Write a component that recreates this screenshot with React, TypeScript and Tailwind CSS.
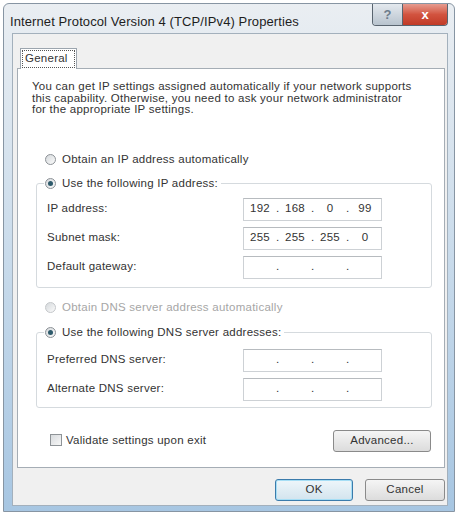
import { Fragment } from 'react'

/**
 * IPv4 properties dialog (Windows 7 look)
 * Title bar, General tab, two radio groups with IP fields, footer buttons.
 */

function Radio({ checked = false, disabled = false }: { checked?: boolean; disabled?: boolean }) {
  return (
    <span
      className={`w-[11px] h-[11px] shrink-0 rounded-full border flex items-center justify-center bg-gradient-to-br from-[#d5d9dc] to-[#fbfbfb] ${
        disabled ? 'border-[#c4c7ca]' : 'border-[#8c9196]'
      }`}
    >
      {checked && <span className="w-[5px] h-[5px] rounded-full bg-[#2e5a6b]" />}
    </span>
  )
}

function IpBox({ value }: { value?: string[] }) {
  return (
    <div className="w-[139px] h-[23px] bg-white border border-[#cdd1d5] border-t-[#b7bbbf] flex items-center text-[#333]">
      {[0, 1, 2, 3].map((i) => (
        <Fragment key={i}>
          <span className="flex-1 text-center">{value?.[i] ?? ''}</span>
          {i < 3 && <span className="w-[3px] text-center">.</span>}
        </Fragment>
      ))}
    </div>
  )
}

function FieldRow({ label, value }: { label: string; value?: string[] }) {
  return (
    <div className="flex items-center pl-[10px]">
      <span className="w-[196px]">{label}</span>
      <IpBox value={value} />
    </div>
  )
}

export default function App() {
  return (
    <div className="w-[460px] h-[515px] bg-white pt-[3px] pl-[3px] pr-[5px] pb-[3px] font-['Liberation_Sans',Arial,sans-serif] text-[#333]">
      {/* Window frame */}
      <div className="h-full flex flex-col rounded-t-[6px] border border-[#8795a3] bg-gradient-to-b from-[#eaeef2] via-[#c9dbeb] to-[#a7c6e2]">
        {/* Title bar */}
        <div className="h-[30px] flex justify-between items-start pl-[6px] pr-[6px]">
          <span className="pt-[10px] text-[13px] leading-[15px] tracking-[0.1px] text-[#1e1e1e]">
            Internet Protocol Version 4 (TCP/IPv4) Properties
          </span>
          <div className="flex h-[22px] border border-t-0 border-[#59646f] rounded-b-[4px] overflow-hidden">
            <div className="w-[30px] flex items-center justify-center bg-gradient-to-b from-[#e4e9ee] to-[#b8c3ce] border-r border-[#59646f] text-[13px] font-bold text-[#6d7c8c]">
              ?
            </div>
            <div className="w-[44px] flex items-center justify-center bg-gradient-to-b from-[#e59b8f] via-[#d2533f] to-[#c13a26] text-[13px] font-bold text-white">
              x
            </div>
          </div>
        </div>

        {/* Client area */}
        <div className="flex-1 pl-[8px] pr-[6px] pb-[5px]">
          <div className="h-full bg-[#f0f0f0] border border-[#a3b0bc] flex flex-col pl-[4px] pr-[2px] pt-[14px] pb-[4px] text-[11.5px] tracking-[0.25px]">
            {/* Tab header */}
            <div className="ml-[3px] w-[57px] h-[21px] -mb-px relative z-10 bg-white border border-b-0 border-[#9ca5ae] p-[1px]">
              <div className="h-full border border-dotted border-[#555] flex items-center pl-[2px] leading-none">
                General
              </div>
            </div>

            {/* Tab panel */}
            <div className="h-[400px] bg-white border border-[#a5adb5] flex flex-col">
              <p className="pl-[14px] pt-[12px] leading-[11.5px] whitespace-nowrap">
                You can get IP settings assigned automatically if your network supports
                <br />
                this capability. Otherwise, you need to ask your network administrator
                <br />
                for the appropriate IP settings.
              </p>

              <div className="mt-[36px] h-[16px] flex items-center gap-[6px] pl-[27px]">
                <Radio />
                <span>Obtain an IP address automatically</span>
              </div>

              <fieldset className="mt-[8px] ml-[18px] mr-[12px] border border-[#d5dade] rounded-[3px] pt-[6px] pb-[8px] flex flex-col gap-[6px]">
                <legend className="ml-[7px] px-[1px]">
                  <span className="h-[16px] flex items-center gap-[6px] pr-[2px]">
                    <Radio checked />
                    <span>Use the following IP address:</span>
                  </span>
                </legend>
                <FieldRow label="IP address:" value={['192', '168', '0', '99']} />
                <FieldRow label="Subnet mask:" value={['255', '255', '255', '0']} />
                <FieldRow label="Default gateway:" />
              </fieldset>

              <div className="mt-[12px] h-[16px] flex items-center gap-[6px] pl-[27px] text-[#a6a6a6]">
                <Radio disabled />
                <span>Obtain DNS server address automatically</span>
              </div>

              <fieldset className="mt-[9px] ml-[18px] mr-[12px] border border-[#d5dade] rounded-[3px] pt-[8px] pb-[6px] flex flex-col gap-[6px]">
                <legend className="ml-[7px] px-[1px]">
                  <span className="h-[16px] flex items-center gap-[6px] pr-[2px]">
                    <Radio checked />
                    <span>Use the following DNS server addresses:</span>
                  </span>
                </legend>
                <FieldRow label="Preferred DNS server:" />
                <FieldRow label="Alternate DNS server:" />
              </fieldset>

              <div className="mt-[22px] flex justify-between items-start pl-[32px] pr-[13px]">
                <div className="mt-[2px] flex items-center gap-[4px]">
                  <span className="w-[12px] h-[12px] border border-[#8e9397] bg-gradient-to-br from-[#d8dbde] to-[#f7f7f7]" />
                  <span>Validate settings upon exit</span>
                </div>
                <button className="w-[98px] h-[22px] rounded-[3px] border border-[#8a8a8a] bg-gradient-to-b from-[#f5f5f5] to-[#dcdcdc]">
                  Advanced...
                </button>
              </div>
            </div>

            {/* Footer buttons */}
            <div className="mt-[11px] flex justify-end gap-[12px]">
              <button className="w-[78px] h-[22px] rounded-[3px] border border-[#3b7bab] shadow-[inset_0_0_0_1px_#a6def5] bg-gradient-to-b from-[#eef6fa] to-[#d3e4ee]">
                OK
              </button>
              <button className="w-[80px] h-[22px] rounded-[3px] border border-[#8a8a8a] bg-gradient-to-b from-[#f5f5f5] to-[#dcdcdc]">
                Cancel
              </button>
            </div>
          </div>
        </div>
      </div>
    </div>
  )
}
